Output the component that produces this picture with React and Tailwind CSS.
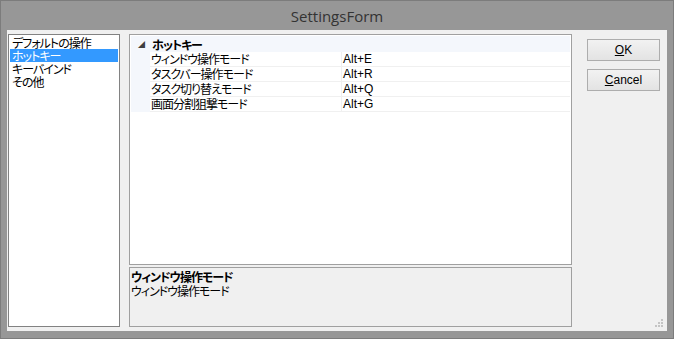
import React from 'react';

const jp = "font-['Noto_Sans_CJK_JP','Noto_Sans',sans-serif] [font-feature-settings:'palt'] tracking-[-1px]";

const categories = ['デフォルトの操作', 'ホットキー', 'キーバインド', 'その他'];

const hotkeys = [
  { name: 'ウィンドウ操作モード', key: 'Alt+E' },
  { name: 'タスクバー操作モード', key: 'Alt+R' },
  { name: 'タスク切り替えモード', key: 'Alt+Q' },
  { name: '画面分割狙撃モード', key: 'Alt+G' },
];

const Button = ({ accel, rest }) => (
  <button className="w-[73px] h-[22px] border border-[#adadad] bg-gradient-to-b from-[#f2f2f2] to-[#e3e3e3] text-[12px] leading-none tracking-normal text-black font-['Liberation_Sans',sans-serif]">
    <span className="underline">{accel}</span>
    {rest}
  </button>
);

const App = () => {
  return (
    <div className="w-[674px] h-[339px] bg-[#979797] border border-[#7c7c7c] flex flex-col">
      {/* Title bar */}
      <div className="h-[29px] flex items-center justify-center">
        <span className="text-[15px] text-[#333333] font-['Open_Sans',sans-serif] pt-[1px]">SettingsForm</span>
      </div>

      {/* Client area */}
      <div className={`relative mx-[6px] h-[301px] bg-[#f0f0f0] flex text-[12px] text-black ${jp}`}>
        {/* Category list */}
        <div className="ml-[1px] mt-[4px] w-[112px] h-[293px] bg-white border border-[#828282] pt-[1px] px-[1px]">
          {categories.map((c, i) => (
            <div
              key={c}
              className={`h-[13px] leading-[13px] pl-[2px] ${i === 1 ? 'bg-[#3399ff] text-white' : ''}`}
            >
              {c}
            </div>
          ))}
        </div>

        {/* Property grid + description */}
        <div className="ml-[9px] mt-[4px] w-[443px] flex flex-col gap-[2px]">
          <div className="h-[231px] bg-white border border-[#a0a0a0] p-[1px]">
            <div className="h-[16px] bg-[#f4f7fc] flex items-center">
              <span className="w-[21px] flex justify-center text-[7px] text-[#404040] pt-[1px] tracking-normal">◢</span>
              <span className="font-bold leading-[13px]">ホットキー</span>
            </div>
            {hotkeys.map((h) => (
              <div key={h.name} className="h-[15px] flex">
                <div className="w-[19px] bg-[#f4f7fc]" />
                <div className="flex-1 flex border-b border-[#f0f0f0]">
                  <div className="w-[192px] pl-[1px] leading-[14px] border-r border-[#f0f0f0]">{h.name}</div>
                  <div className="flex-1 pl-[1px] leading-[14px] tracking-normal font-['Liberation_Sans',sans-serif]">{h.key}</div>
                </div>
              </div>
            ))}
          </div>
          <div className="h-[60px] border border-[#a0a0a0] bg-[#f0f0f0] px-[1px] pt-[1px]">
            <div className="font-bold leading-[15px]">ウィンドウ操作モード</div>
            <div className="leading-[14px]">ウィンドウ操作モード</div>
          </div>
        </div>

        {/* Buttons */}
        <div className="ml-[15px] mt-[9px] flex flex-col gap-[8px]">
          <Button accel="O" rest="K" />
          <Button accel="C" rest="ancel" />
        </div>

        {/* Resize grip */}
        <svg className="absolute right-[3px] bottom-[3px]" width="9" height="9" viewBox="0 0 9 9">
          <g fill="#c4c4c4">
            <rect x="6" y="0" width="2" height="2" />
            <rect x="3" y="3" width="2" height="2" />
            <rect x="6" y="3" width="2" height="2" />
            <rect x="0" y="6" width="2" height="2" />
            <rect x="3" y="6" width="2" height="2" />
            <rect x="6" y="6" width="2" height="2" />
          </g>
        </svg>
      </div>
    </div>
  );
};

export default App;
